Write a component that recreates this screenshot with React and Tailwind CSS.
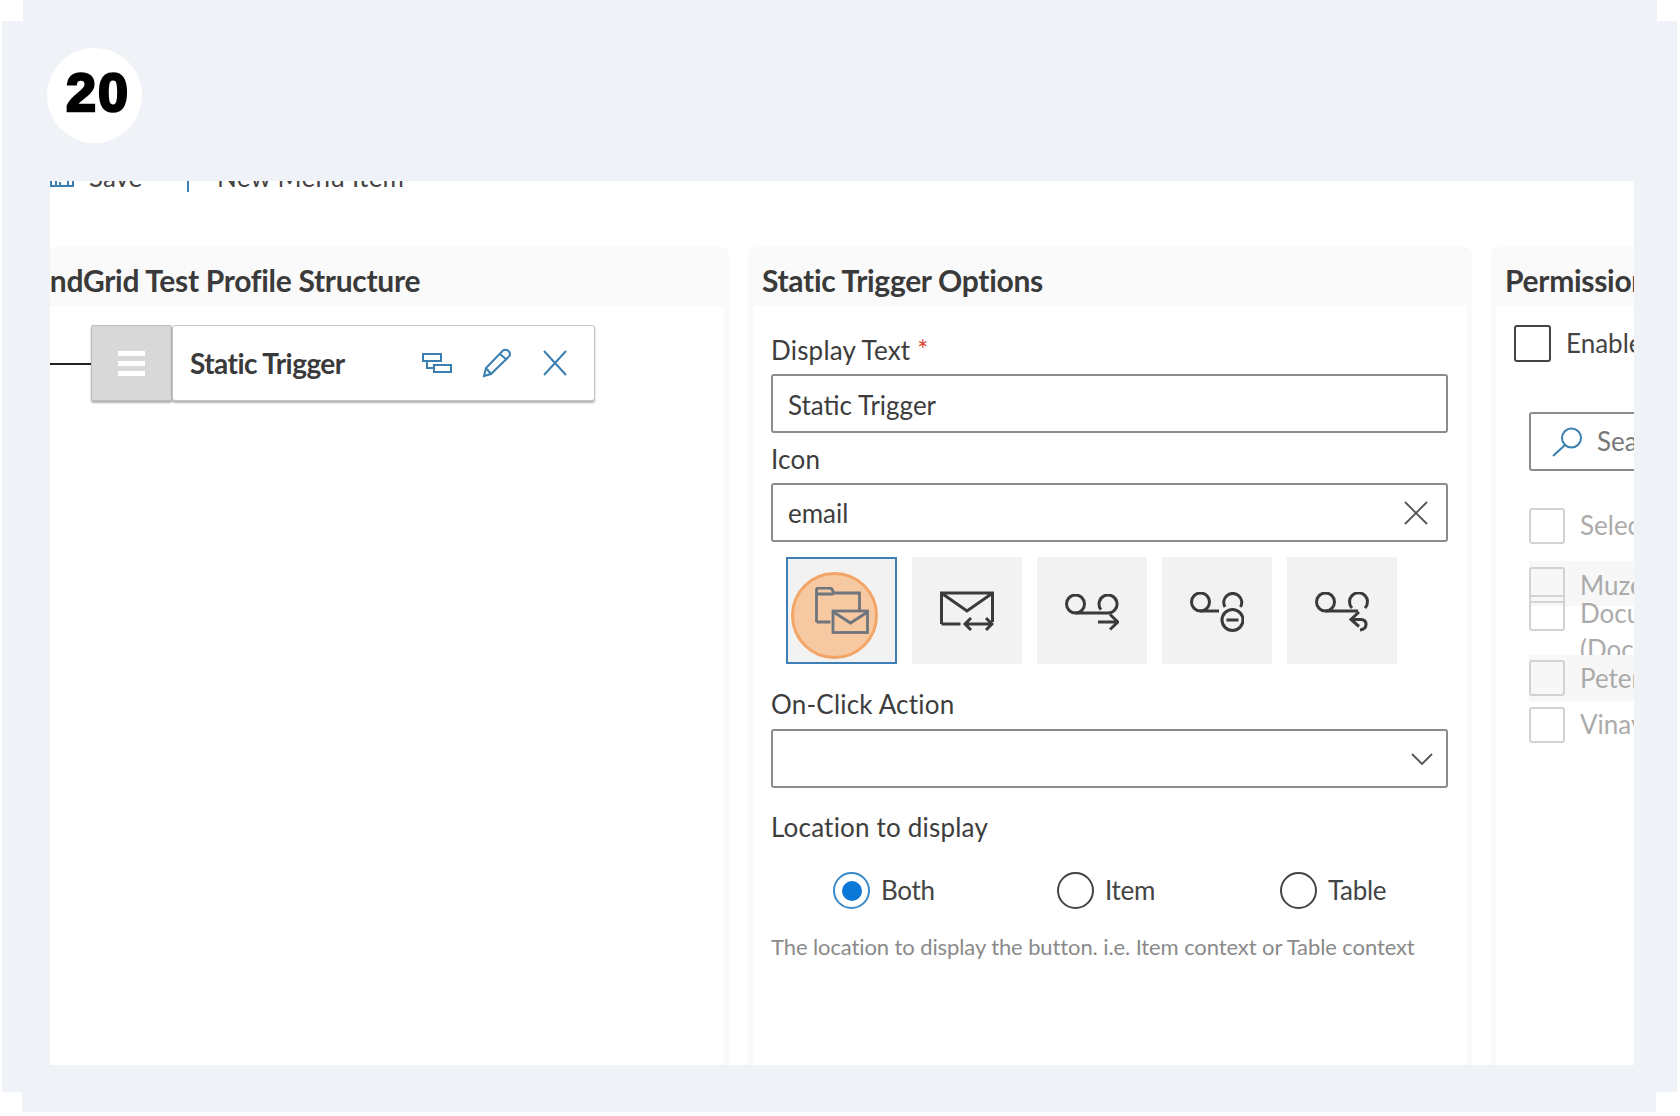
import React from "react";
import { ChevronDown } from "lucide-react";

const LATO = { fontFamily: "Lato, 'Open Sans', sans-serif" };

function FolderMailIcon() {
  return (
    <svg width="54" height="47" viewBox="0 0 54 47" fill="none" stroke="#6f757c" strokeWidth="2.8" className="relative">
      <path d="M1.5 35V3q0-2 2-2h11q3 0 4 5h26v18" />
      <path d="M1.5 7h17M1.5 35h14" />
      <rect x="18" y="24" width="34.5" height="21.5" />
      <path d="M18.5 25l17 11 17-11" />
    </svg>
  );
}

function MailSwapIcon() {
  return (
    <svg width="54" height="42" viewBox="0 0 54 42" fill="none" stroke="#3a3a3a" strokeWidth="3" className="mt-[3px]">
      <path d="M1.5 33V2h51v29M1.5 33h19M2 2.5L27 20 52 2.5" />
      <path d="M25 33h27M31 27l-6 6 6 6M46 27l6 6-6 6" />
    </svg>
  );
}

function VoicemailForwardIcon() {
  return (
    <svg width="54" height="37" viewBox="0 0 54 37" fill="none" stroke="#3a3a3a" strokeWidth="3" className="mt-[3px]">
      <circle cx="10.5" cy="10" r="9" />
      <path d="M10.5 19H43M43 19a9 9 0 1 0-7-3.4M50 15.6a9 9 0 0 0 1.5-3" />
      <path d="M33 28h20M45 20.5l8 7.5-8 7.5" />
    </svg>
  );
}

function VoicemailRemoveIcon() {
  return (
    <svg width="54" height="40" viewBox="0 0 54 40" fill="none" stroke="#3a3a3a" strokeWidth="3" className="mt-[3px]">
      <circle cx="10.5" cy="10" r="9" />
      <path d="M10.5 19H29M35 15a9 9 0 1 1 15.5 0" />
      <circle cx="42.5" cy="28" r="10.5" />
      <path d="M36.5 28h12" />
    </svg>
  );
}

function VoicemailReplyIcon() {
  return (
    <svg width="54" height="40" viewBox="0 0 54 40" fill="none" stroke="#3a3a3a" strokeWidth="3" className="mt-[3px]">
      <circle cx="10.5" cy="10" r="9" />
      <path d="M10.5 19H43M37 16a9 9 0 1 1 13 0" />
      <path d="M44 20l-8 7.5 8 7M36 27.500h10q5 0 5 5t-6 5.500" />
    </svg>
  );
}

function Field({ children, right }) {
  return (
    <div className="flex items-center justify-between w-[677px] border-2 border-[#8c8c8c] rounded-[3px] bg-white pl-[15px] text-[26px] text-[#3d3d3d]">
      {children}
      {right}
    </div>
  );
}

function Label({ children, className }) {
  return <div className={"h-[30px] leading-[30px] text-[26px] text-[#3d3d3d] tracking-[0.2px] " + className}>{children}</div>;
}

function Radio({ label, checked }) {
  return (
    <div className="flex items-center gap-[11px]">
      <div className={"w-[37px] h-[37px] rounded-full border-2 flex items-center justify-center " + (checked ? "border-[#3a8ac8]" : "border-[#444444]")}>
        {checked && <div className="w-[20px] h-[20px] rounded-full bg-[#0b78d8]" />}
      </div>
      <span className="text-[26px] text-[#444444] tracking-[-0.3px]">{label}</span>
    </div>
  );
}

function Box({ className }) {
  return <div className={"w-[36px] h-[36px] shrink-0 border-2 border-[#d2d2d2] rounded-[3px] " + (className || "")} />;
}

function Tile({ children, selected }) {
  return (
    <div className={"relative h-[107px] bg-[#f2f2f2] flex items-center justify-center " + (selected ? "w-[111px] border-2 border-[#3f7fb5]" : "w-[110px]")}>
      {selected && <div className="absolute left-[3px] top-[13px] w-[87px] h-[87px] rounded-full bg-[#f7c9a3] border-[3px] border-[#f2a566]" />}
      {children}
    </div>
  );
}

function App() {
  return (
    <div className="w-[1680px] h-[1116px] bg-white overflow-hidden" style={LATO}>
      <div className="ml-[23px] w-[1634px] h-[21px] bg-[#eff3f8]" />
      <div className="ml-[2px] w-[1675px] h-[1071px] bg-[#eff3f8] pt-[27px] pl-[45px]">
        <div className="w-[95px] h-[95px] rounded-full bg-white flex items-center justify-center pb-[6px] pl-[7px]">
          <span className="text-[54px] font-bold text-black tracking-[2px] [-webkit-text-stroke:2.5px_black]" style={{ fontFamily: "'Liberation Sans', sans-serif" }}>20</span>
        </div>

        <div className="mt-[38px] ml-[3px] w-[1584px] h-[884px] bg-white overflow-hidden">
          {/* toolbar, scrolled mostly out of view */}
          <div className="h-[11px] flex items-end overflow-hidden text-[#444444] text-[26px] leading-[32px]">
            <div className="flex items-center h-[32px] shrink-0 mb-[-1px]">
              <svg width="24" height="24" viewBox="0 0 24 24" fill="none" stroke="#3a7fb0" strokeWidth="2" className="mt-[-3px]">
                <path d="M1 22V2h22v20zM6 22v-8h12v8M10 22v-4" />
              </svg>
              <span className="ml-[15px] w-[98px]">Save</span>
              <span className="w-[2px] h-[32px] bg-[#3a7fb0]" />
              <span className="ml-[28px] tracking-[0.25px]">New Menu Item</span>
              <ChevronDown size={14} className="ml-[18px] text-[#3a7fb0]" />
            </div>
          </div>

          <div className="mt-[55px] h-[818px] flex gap-[19px]">
            {/* structure */}
            <div className="w-[679px] shrink-0 border-r-[5px] border-[#fafafa] rounded-tr-[8px] overflow-hidden">
              <div className="h-[59px] bg-[#fafafa] flex items-center overflow-hidden pt-[8px]">
                <span className="ml-[-32px] whitespace-nowrap text-[30px] font-bold text-[#3a3a3a] tracking-[-0.3px]">SendGrid Test Profile Structure</span>
              </div>
              <div className="mt-[19px] flex items-center">
                <div className="w-[41px] h-[2px] mt-[2px] bg-[#222222]" />
                <div className="w-[81px] h-[76px] bg-[#d8d8d8] border border-[#bdbdbd] rounded-[2px] shadow-[0_2px_2px_rgba(0,0,0,0.3)] flex flex-col items-center justify-center gap-[5px]">
                  <div className="w-[27px] h-[5px] bg-white" />
                  <div className="w-[27px] h-[5px] bg-white" />
                  <div className="w-[27px] h-[5px] bg-white" />
                </div>
                <div className="w-[423px] h-[76px] bg-white border border-[#c4c4c4] rounded-[3px] shadow-[0_2px_2px_rgba(0,0,0,0.3)] flex items-center pl-[17px]">
                  <span className="w-[232px] text-[28px] font-bold text-[#3a3a3a] tracking-[-0.55px]">Static Trigger</span>
                  <svg width="30" height="20" viewBox="0 0 30 20" fill="none" stroke="#3a7fb0" strokeWidth="2">
                    <rect x="1" y="1" width="18" height="7" />
                    <rect x="12" y="12" width="17" height="7" />
                    <path d="M5 8v7h7" />
                  </svg>
                  <svg width="30" height="30" viewBox="0 0 30 30" fill="none" stroke="#3a7fb0" strokeWidth="2" className="ml-[30px]">
                    <path d="M2 28l2-8L21 2.500q2-1.500 5 0 3 2.500 1.500 5.500L9 26zM4 20l5 6M18 6l7 6" />
                  </svg>
                  <svg width="24" height="26" viewBox="0 0 24 26" fill="none" stroke="#3a7fb0" strokeWidth="2" className="ml-[31px]">
                    <path d="M1 1l22 24M23 1L1 25" />
                  </svg>
                </div>
              </div>
            </div>

            {/* options */}
            <div className="w-[724px] shrink-0 border-x-[5px] border-[#fafafa] rounded-t-[8px]">
              <div className="h-[59px] bg-[#fafafa] flex items-center pl-[9px] pt-[8px]">
                <span className="text-[30px] font-bold text-[#3a3a3a] tracking-[-0.3px]">Static Trigger Options</span>
              </div>
              <div className="pl-[18px]">
                <Label className="mt-[29px]">Display Text <span className="text-[#d9412f]">*</span></Label>
                <div className="mt-[9px]">
                  <Field><span className="h-[55px] leading-[55px] pt-[2px]">Static Trigger</span></Field>
                </div>
                <Label className="mt-[11px]">Icon</Label>
                <div className="mt-[9px]">
                  <Field right={
                    <svg width="24" height="24" viewBox="0 0 24 24" fill="none" stroke="#555555" strokeWidth="1.8" className="mr-[18px]">
                      <path d="M1 1l22 22M23 1L1 23" />
                    </svg>
                  }><span className="h-[55px] leading-[55px] pt-[1px]">email</span></Field>
                </div>
                <div className="mt-[15px] ml-[15px] flex gap-[15px]">
                  <Tile selected><FolderMailIcon /></Tile>
                  <Tile><MailSwapIcon /></Tile>
                  <Tile><VoicemailForwardIcon /></Tile>
                  <Tile><VoicemailRemoveIcon /></Tile>
                  <Tile><VoicemailReplyIcon /></Tile>
                </div>
                <Label className="mt-[25px]">On-Click Action</Label>
                <div className="mt-[10px]">
                  <Field right={
                    <svg width="22" height="12" viewBox="0 0 22 12" fill="none" stroke="#555555" strokeWidth="1.8" className="mr-[13px]">
                      <path d="M1 1l10 10L21 1" />
                    </svg>
                  }><span className="h-[55px]" /></Field>
                </div>
                <Label className="mt-[24px]">Location to display</Label>
                <div className="mt-[29px] ml-[62px] grid grid-cols-[224px_223px_auto]">
                  <Radio label="Both" checked />
                  <Radio label="Item" />
                  <Radio label="Table" />
                </div>
                <div className="mt-[22px] h-[30px] leading-[30px] text-[22px] text-[#8a8a8a] tracking-[-0.1px] whitespace-nowrap">
                  The location to display the button. i.e. Item context or Table context
                </div>
              </div>
            </div>

            {/* permissions, cut off by the panel edge */}
            <div className="flex-1 min-w-0 border-l-[5px] border-[#fafafa] rounded-tl-[8px] overflow-hidden">
              <div className="h-[59px] bg-[#fafafa] flex items-center pl-[9px] pt-[8px]">
                <span className="whitespace-nowrap text-[30px] font-bold text-[#3a3a3a] tracking-[-0.3px]">Permissions</span>
              </div>
              <div className="mt-[17px] ml-[18px] flex items-center gap-[15px] whitespace-nowrap">
                <div className="w-[37px] h-[37px] shrink-0 border-2 border-[#444444] rounded-[3px]" />
                <span className="text-[26px] text-[#444444] pt-[1px]">Enabled</span>
              </div>
              <div className="mt-[49px] ml-[33px] w-[300px] h-[59px] shrink-0 border-2 border-[#8c8c8c] rounded-[3px] flex items-center pl-[21px] whitespace-nowrap">
                <svg width="31" height="30" viewBox="0 0 31 30" fill="none" stroke="#3a7fb0" strokeWidth="2">
                  <circle cx="19.500" cy="11" r="9.500" />
                  <path d="M13 18L1 29" />
                </svg>
                <span className="ml-[14px] text-[26px] text-[#777777]">Search</span>
              </div>
              <div className="mt-[35px] ml-[33px] flex items-center gap-[15px] whitespace-nowrap text-[26px] text-[#ababab]">
                <Box />
                <span>Select All</span>
              </div>
              <div className="mt-[16px] h-[94px] overflow-hidden">
                <div className="ml-[33px] h-[45px] bg-[#f7f7f7] -mb-[45px]" />
                <div className="relative pl-[33px] flex gap-[15px] text-[26px] text-[#ababab] leading-[28px] whitespace-nowrap">
                  <div className="flex flex-col pt-[6px]">
                    <Box />
                    <Box className="-mt-[8px]" />
                  </div>
                  <div className="pt-[10px]">
                    <div>Muzeeb</div>
                    <div>Document</div>
                    <div className="mt-[8px]">(Document)</div>
                  </div>
                </div>
              </div>
              <div className="ml-[33px] h-[46px] bg-[#f7f7f7] flex items-center gap-[15px] text-[26px] text-[#ababab] whitespace-nowrap">
                <Box />
                <span>Peter</span>
              </div>
              <div className="mt-[4px] pl-[33px] flex items-center gap-[15px] text-[26px] text-[#ababab] whitespace-nowrap">
                <Box />
                <span>Vinay</span>
              </div>
            </div>
          </div>
        </div>
      </div>
      <div className="ml-[22px] w-[1634px] h-[20px] bg-[#eff3f8]" />
    </div>
  );
}

export default App;
